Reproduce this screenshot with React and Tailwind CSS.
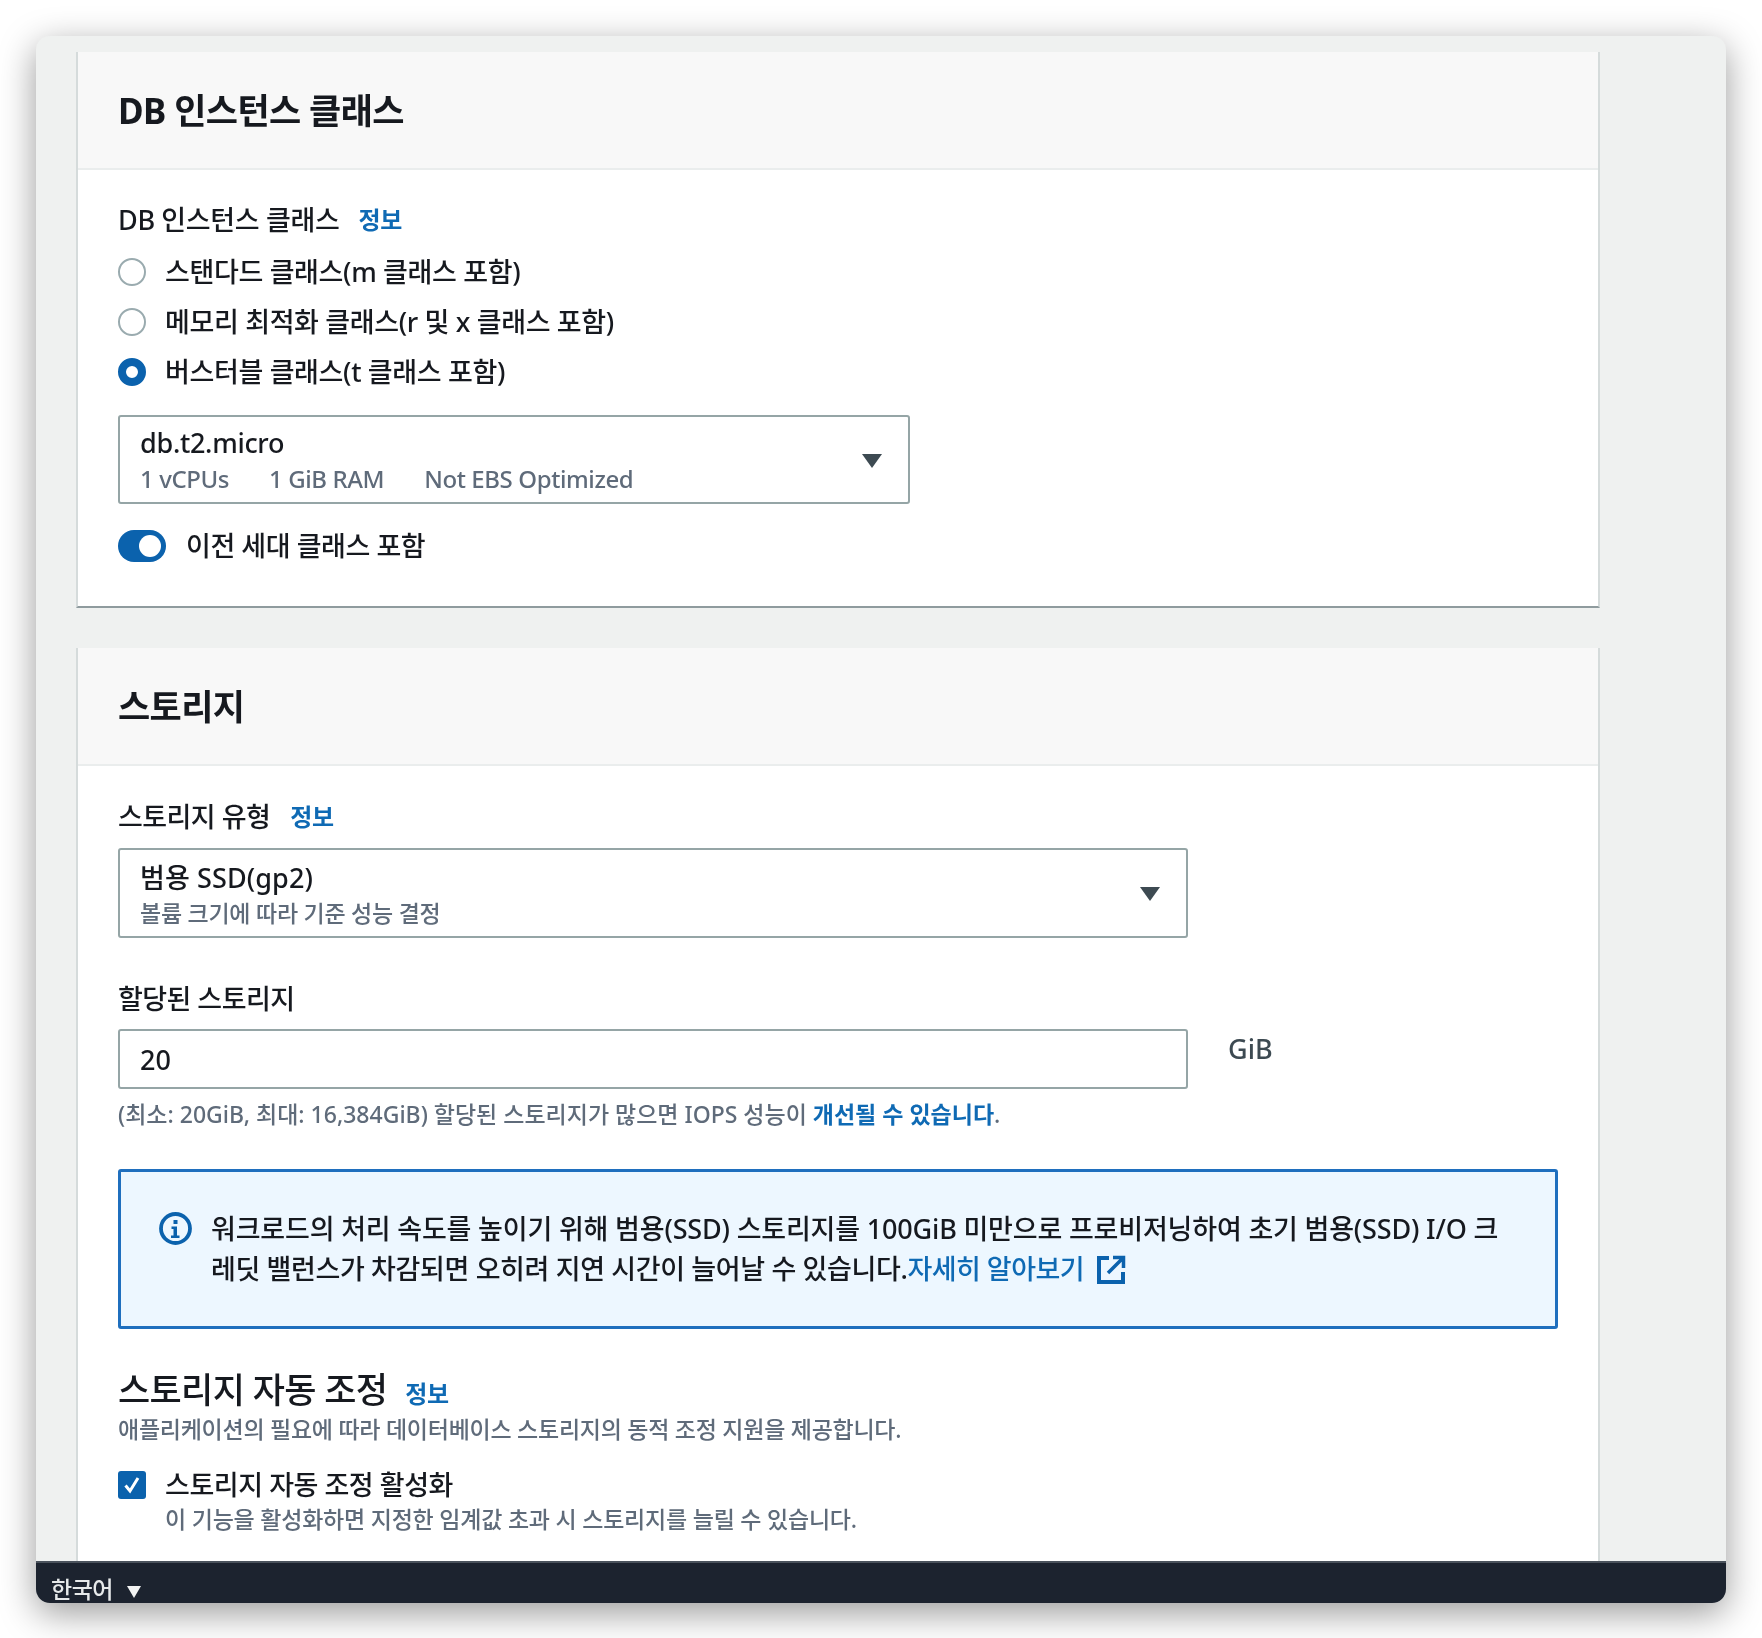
import React from "react";

const FONT = "font-['Noto_Sans','Noto_Sans_CJK_KR',sans-serif]";

function Info({ className = "" }) {
  return <span className={`text-[24px] leading-[32px] font-bold text-[#0f6ab4] tracking-[-0.3px] ${className}`}>정보</span>;
}

function Radio({ checked, label }) {
  return (
    <div className="flex items-center h-[50px] gap-[19px]">
      {checked ? (
        <span className="w-[28px] h-[28px] rounded-full border-[8px] border-[#0b62ad] bg-white shrink-0" />
      ) : (
        <span className="w-[28px] h-[28px] rounded-full border-2 border-[#9aabaf] bg-white shrink-0" />
      )}
      <span className="text-[27px] leading-[36px] text-[#16191f] tracking-[-0.35px]">{label}</span>
    </div>
  );
}

function Caret() {
  return (
    <svg width="22" height="16" viewBox="0 0 22 16" className="shrink-0 mt-[2px]">
      <path d="M1 1h20L11 15z" fill="#3d4a52" />
    </svg>
  );
}

function PanelHead({ children }) {
  return (
    <div className="h-[118px] bg-[#f8f8f8] border-b-2 border-[#eaeded] flex items-center px-[40px] pt-[2px]">
      <h2 className="text-[35px] leading-[44px] font-bold text-[#16191f] tracking-[-0.6px]">{children}</h2>
    </div>
  );
}

export default function App() {
  return (
    <div className={`w-[1762px] h-[1638px] bg-white pt-[36px] pl-[36px] font-medium ${FONT}`}>
      <div className="w-[1690px] h-[1567px] rounded-[14px] overflow-hidden flex flex-col bg-[#eff1f0] shadow-[0_10px_36px_rgba(0,0,0,0.4)] blur-[0.7px]">
        <main className="flex-1 min-h-0 overflow-hidden pt-[16px] pl-[40px]">
          {/* DB instance class */}
          <section className="w-[1524px] h-[556px] bg-white border-l-2 border-r-2 border-[#d5dbdb] border-b-2 border-b-[#8f9b9e]">
            <PanelHead>DB 인스턴스 클래스</PanelHead>
            <div className="px-[40px] pt-[32px]">
              <div className="flex items-center gap-[19px] h-[36px]">
                <span className="text-[27px] leading-[36px] text-[#16191f] tracking-[-0.35px]">DB 인스턴스 클래스</span>
                <Info />
              </div>
              <div className="mt-[9px]">
                <Radio label="스탠다드 클래스(m 클래스 포함)" />
                <Radio label="메모리 최적화 클래스(r 및 x 클래스 포함)" />
                <Radio checked label="버스터블 클래스(t 클래스 포함)" />
              </div>
              <div className="mt-[18px] w-[792px] h-[89px] border-2 border-[#95a5a6] rounded-[3px] flex items-center justify-between pl-[20px] pr-[25px]">
                <div className="pt-[1px]">
                  <div className="text-[27px] leading-[36px] text-[#16191f] tracking-[-0.3px]">db.t2.micro</div>
                  <div className="mt-[2px] text-[24px] leading-[32px] text-[#5f6b7a] flex gap-[40px] tracking-[-0.4px]">
                    <span>1 vCPUs</span>
                    <span>1 GiB RAM</span>
                    <span>Not EBS Optimized</span>
                  </div>
                </div>
                <Caret />
              </div>
              <div className="mt-[24px] flex items-center gap-[20px]">
                <span className="w-[48px] h-[32px] rounded-full bg-[#0b62ad] flex items-center justify-end pr-[5px]">
                  <span className="w-[22px] h-[22px] rounded-full bg-white" />
                </span>
                <span className="text-[27px] leading-[36px] text-[#16191f] tracking-[-0.45px]">이전 세대 클래스 포함</span>
              </div>
            </div>
          </section>

          {/* Storage */}
          <section className="mt-[40px] w-[1524px] h-[1000px] bg-white border-l-2 border-r-2 border-[#d5dbdb]">
            <PanelHead>스토리지</PanelHead>
            <div className="px-[40px] pt-[33px]">
              <div className="flex items-center gap-[20px] h-[36px]">
                <span className="text-[27px] leading-[36px] text-[#16191f] tracking-[-0.55px]">스토리지 유형</span>
                <Info />
              </div>
              <div className="mt-[13px] w-[1070px] h-[90px] border-2 border-[#95a5a6] rounded-[3px] flex items-center justify-between pl-[20px] pr-[25px]">
                <div className="pt-[2px]">
                  <div className="text-[27px] leading-[36px] text-[#16191f] tracking-[0.1px]">범용 SSD(gp2)</div>
                  <div className="mt-[1px] text-[23px] leading-[32px] text-[#5f6b7a] tracking-[-0.25px]">볼륨 크기에 따라 기준 성능 결정</div>
                </div>
                <Caret />
              </div>
              <div className="mt-[43px] h-[36px] text-[27px] leading-[36px] text-[#16191f] tracking-[-0.55px]">할당된 스토리지</div>
              <div className="mt-[12px] flex items-start gap-[40px]">
                <div className="w-[1070px] h-[60px] border-2 border-[#95a5a6] rounded-[3px] flex items-center pl-[20px] pt-[2px] text-[27px] text-[#16191f]">20</div>
                <span className="text-[27px] leading-[36px] text-[#3d4a52] mt-[2px]">GiB</span>
              </div>
              <p className="mt-[7px] text-[23px] leading-[36px] text-[#5f6b7a] tracking-[0px]">
                (최소: 20GiB, 최대: 16,384GiB) 할당된 스토리지가 많으면 IOPS 성능이 <span className="font-bold text-[#0f6ab4]">개선될 수 있습니다</span>.
              </p>
              <div className="mt-[37px] w-[1440px] h-[160px] border-[3px] border-[#1f6fbe] rounded-[3px] bg-[#edf7ff] flex pl-[38px] pr-[45px] pt-[37px] gap-[19px]">
                <svg width="33" height="33" viewBox="0 0 33 33" className="shrink-0 mt-[3px]">
                  <circle cx="16.5" cy="16.5" r="14.5" fill="none" stroke="#0b62ad" strokeWidth="3.8" />
                  <rect x="14.5" y="8" width="4" height="4" fill="#0b62ad" />
                  <path d="M12.5 14.5h5.5v9h2.5v2.5h-8.5v-2.5h2.500v-6.500h-2z" fill="#0b62ad" />
                </svg>
                <p className="text-[27px] leading-[40px] text-[#16191f] tracking-[-0.18px]">
                  워크로드의 처리 속도를 높이기 위해 범용(SSD) 스토리지를 100GiB 미만으로 프로비저닝하여 초기 범용(SSD) I/O 크<span className="tracking-[-0.37px]">레딧 밸런스가 차감되면 오히려 지연 시간이 늘어날 수 있습니다.</span><span className="text-[#0f6ab4] tracking-[-0.53px]">자세히 알아보기</span>
                  <svg width="30" height="30" viewBox="0 0 30 30" className="inline-block align-[-6px] ml-[12px]">
                    <path d="M13 3H3v24h24V17" fill="none" stroke="#0b62ad" strokeWidth="4" />
                    <path d="M12 18 26 4M17 2.500h10.500V13" fill="none" stroke="#0b62ad" strokeWidth="3.500" />
                  </svg>
                </p>
              </div>
              <div className="mt-[39px] flex items-end gap-[18px]">
                <span className="text-[35px] leading-[44px] text-[#16191f] tracking-[-0.65px]">스토리지 자동 조정</span>
                <Info className="mb-[2px]" />
              </div>
              <p className="mt-[2px] text-[23px] leading-[30px] text-[#5f6b7a] tracking-[-0.26px]">애플리케이션의 필요에 따라 데이터베이스 스토리지의 동적 조정 지원을 제공합니다.</p>
              <div className="mt-[23px] flex items-start gap-[19px]">
                <span className="mt-[4px] w-[28px] h-[28px] rounded-[3px] bg-[#0b62ad] flex items-center justify-center shrink-0">
                  <svg width="20" height="20" viewBox="0 0 20 20">
                    <path d="M3.500 10.500 8 16 16 3" fill="none" stroke="#fff" strokeWidth="3" />
                  </svg>
                </span>
                <div>
                  <div className="text-[27px] leading-[36px] text-[#16191f] tracking-[-0.45px]">스토리지 자동 조정 활성화</div>
                  <div className="text-[23px] leading-[32px] text-[#5f6b7a] tracking-[-0.22px]">이 기능을 활성화하면 지정한 임계값 초과 시 스토리지를 늘릴 수 있습니다.</div>
                </div>
              </div>
            </div>
          </section>
        </main>
        <footer className="h-[42px] shrink-0 bg-[#1c232f] border-t-2 border-[#4a525c] flex items-start pl-[15px] pt-[13px] gap-[12px]">
          <span className="text-[23px] leading-[27px] text-[#e6e9ea] tracking-[-0.5px]">한국어</span>
          <svg width="16" height="14" viewBox="0 0 16 14" className="mt-[9px] ml-[1px]">
            <path d="M1 1h14L8 13z" fill="#f2f3f3" />
          </svg>
        </footer>
      </div>
    </div>
  );
}
